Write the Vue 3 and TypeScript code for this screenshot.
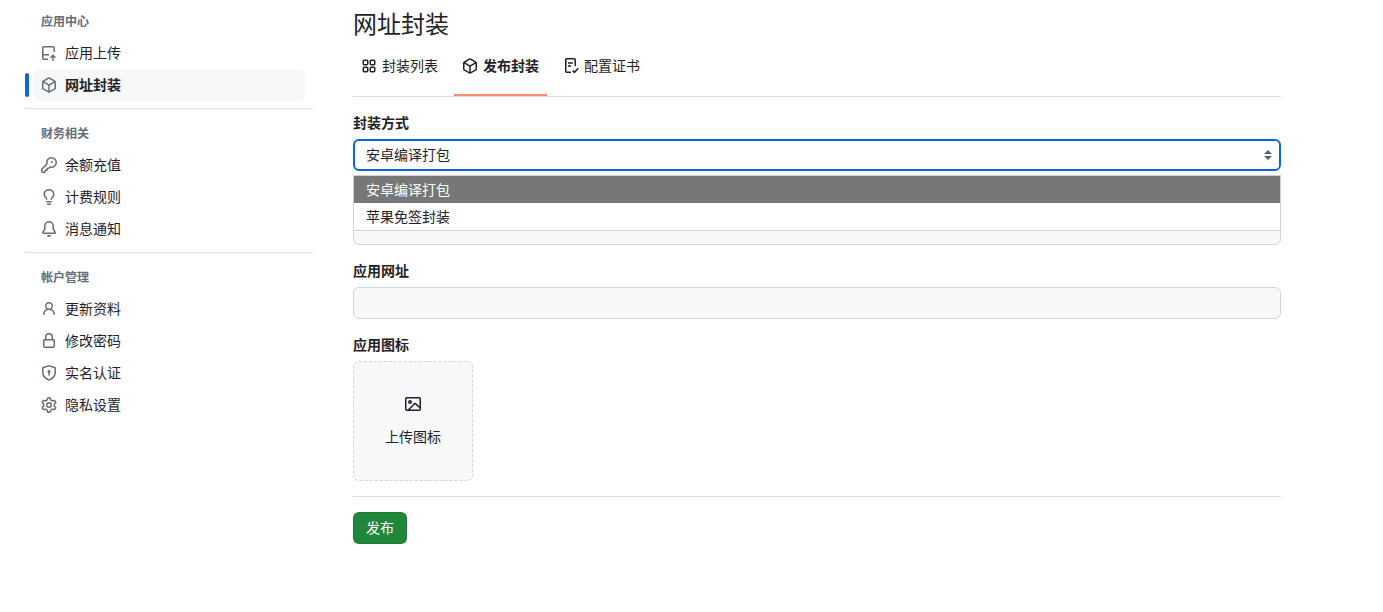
<script setup lang="ts">
const pkg = "m8.878.392 5.25 3.045c.54.314.872.89.872 1.514v6.098a1.75 1.75 0 0 1-.872 1.514l-5.25 3.045a1.75 1.75 0 0 1-1.756 0l-5.25-3.045A1.75 1.75 0 0 1 1 11.049V4.951c0-.624.332-1.201.872-1.514L7.122.392a1.75 1.75 0 0 1 1.756 0ZM7.875 1.69l-4.63 2.685L8 7.133l4.755-2.758-4.63-2.685a.248.248 0 0 0-.25 0ZM2.5 5.677v5.372c0 .09.047.171.125.216l4.625 2.683V8.432Zm6.25 8.271 4.625-2.683a.25.25 0 0 0 .125-.216V5.677L8.75 8.432Z";
const upload = "M1 2.75C1 1.784 1.784 1 2.75 1h9.5C13.216 1 14 1.784 14 2.75V7h-1.5V2.75a.25.25 0 0 0-.25-.25h-9.5a.25.25 0 0 0-.25.25V9h5.5v1.5H2.5v2.75c0 .138.112.25.25.25H7V15H2.75A1.75 1.75 0 0 1 1 13.25ZM12 9.2l3 3-1.05 1.05-1.2-1.2V16h-1.5v-3.95l-1.2 1.2L9 12.2Z";
const key = "M10.5 0a5.499 5.499 0 1 1-1.288 10.848l-.932.932a.749.749 0 0 1-.53.22H7v.75a.749.749 0 0 1-.22.53l-.5.5a.749.749 0 0 1-.53.22H5v.75a.749.749 0 0 1-.22.53l-.5.5a.749.749 0 0 1-.53.22h-2A1.75 1.75 0 0 1 0 14.25v-2c0-.199.079-.389.22-.53l4.932-4.932A5.5 5.5 0 0 1 10.5 0Zm-4 5.5c-.001.431.069.86.205 1.269a.75.75 0 0 1-.181.768L1.5 12.56v1.69c0 .138.112.25.25.25h1.69l.06-.06v-1.19a.75.75 0 0 1 .75-.75h1.19l.06-.06v-1.19a.75.75 0 0 1 .75-.75h1.19l1.023-1.025a.75.75 0 0 1 .768-.18A4 4 0 1 0 6.5 5.5ZM11 6a1 1 0 1 1 0-2 1 1 0 0 1 0 2Z";
const bulb = "M8 1.5c-2.363 0-4 1.69-4 3.75 0 .984.424 1.625.984 2.304l.214.253c.223.264.47.556.673.848.284.411.537.896.621 1.49a.75.75 0 0 1-1.484.211c-.04-.282-.163-.547-.37-.847a8.456 8.456 0 0 0-.542-.68c-.084-.1-.173-.205-.268-.32C3.201 7.75 2.5 6.766 2.5 5.25 2.5 2.31 4.863 0 8 0s5.5 2.31 5.5 5.25c0 1.516-.701 2.5-1.328 3.259-.095.115-.184.22-.268.319-.207.245-.383.453-.541.681-.208.3-.33.565-.37.847a.751.751 0 0 1-1.485-.212c.084-.593.337-1.078.621-1.489.203-.292.45-.584.673-.848.075-.088.147-.173.213-.253.561-.679.985-1.32.985-2.304 0-2.06-1.637-3.75-4-3.75ZM5.75 12h4.5a.75.75 0 0 1 0 1.5h-4.5a.75.75 0 0 1 0-1.5ZM6 15.25a.75.75 0 0 1 .75-.75h2.5a.75.75 0 0 1 0 1.5h-2.5a.75.75 0 0 1-.75-.75Z";
const bell = "M8 16a2 2 0 0 0 1.985-1.75c.017-.137-.097-.25-.235-.25h-3.5c-.138 0-.252.113-.235.25A2 2 0 0 0 8 16ZM3 5a5 5 0 0 1 10 0v2.947c0 .05.015.098.042.139l1.703 2.555A1.519 1.519 0 0 1 13.482 13H2.518a1.516 1.516 0 0 1-1.263-2.36l1.703-2.554A.255.255 0 0 0 3 7.947Zm5-3.5A3.5 3.5 0 0 0 4.5 5v2.947c0 .346-.102.683-.294.97l-1.703 2.556a.017.017 0 0 0-.003.01l.001.006c0 .002.002.004.004.006l.006.004.007.001h10.964l.007-.001.006-.004.004-.006.001-.007a.017.017 0 0 0-.003-.01l-1.703-2.554a1.745 1.745 0 0 1-.294-.97V5A3.5 3.5 0 0 0 8 1.5Z";
const person = "M10.561 8.073a6.005 6.005 0 0 1 3.432 5.142.75.75 0 1 1-1.498.07 4.5 4.5 0 0 0-8.99 0 .75.75 0 0 1-1.498-.07 6.004 6.004 0 0 1 3.431-5.142 3.999 3.999 0 1 1 5.123 0ZM10.5 5a2.5 2.5 0 1 0-5 0 2.5 2.5 0 0 0 5 0Z";
const lock = "M4 4a4 4 0 0 1 8 0v2h.25c.966 0 1.75.784 1.75 1.75v5.5A1.75 1.75 0 0 1 12.25 15h-8.5A1.75 1.75 0 0 1 2 13.25v-5.5C2 6.784 2.784 6 3.75 6H4Zm8.25 3.5h-8.5a.25.25 0 0 0-.25.25v5.5c0 .138.112.25.25.25h8.5a.25.25 0 0 0 .25-.25v-5.5a.25.25 0 0 0-.25-.25ZM10.5 6V4a2.5 2.5 0 1 0-5 0v2Z";
const shield = "m8.533.133 5.25 1.68A1.75 1.75 0 0 1 15 3.48V7c0 1.566-.32 3.182-1.303 4.682-.983 1.498-2.585 2.813-5.032 3.855a1.697 1.697 0 0 1-1.33 0c-2.447-1.042-4.049-2.357-5.032-3.855C1.32 10.182 1 8.566 1 7V3.48a1.75 1.75 0 0 1 1.217-1.667l5.25-1.68a1.748 1.748 0 0 1 1.066 0Zm-.61 1.429.001.001-5.25 1.68a.251.251 0 0 0-.174.237V7c0 1.36.275 2.666 1.057 3.859.784 1.194 2.121 2.342 4.366 3.298a.196.196 0 0 0 .154 0c2.245-.957 3.582-2.103 4.366-3.297C13.225 9.666 13.5 8.358 13.5 7V3.48a.25.25 0 0 0-.174-.238l-5.25-1.68a.25.25 0 0 0-.153 0ZM9.5 6.5c0 .536-.286 1.032-.75 1.299V10a.75.75 0 0 1-1.5 0V7.799A1.5 1.5 0 1 1 9.5 6.5Z";
const gear = "M8 0a8.2 8.2 0 0 1 .701.031C9.444.095 9.99.645 10.16 1.29l.288 1.107c.018.066.079.158.212.224.231.114.454.243.668.386.123.082.233.09.299.071l1.103-.303c.644-.176 1.392.021 1.82.63.27.385.506.792.704 1.218.315.675.111 1.422-.364 1.891l-.814.806c-.049.048-.098.147-.088.294.016.257.016.515 0 .772-.01.147.038.246.088.294l.814.806c.475.469.679 1.216.364 1.891a7.977 7.977 0 0 1-.704 1.217c-.428.61-1.176.807-1.82.63l-1.102-.302c-.067-.019-.177-.011-.3.071a5.909 5.909 0 0 1-.668.386c-.133.066-.194.158-.211.224l-.29 1.106c-.168.646-.715 1.196-1.458 1.26a8.006 8.006 0 0 1-1.402 0c-.743-.064-1.289-.614-1.458-1.26l-.289-1.106c-.018-.066-.079-.158-.212-.224a5.738 5.738 0 0 1-.668-.386c-.123-.082-.233-.09-.299-.071l-1.103.303c-.644.176-1.392-.021-1.82-.63a8.12 8.12 0 0 1-.704-1.218c-.315-.675-.111-1.422.363-1.891l.815-.806c.05-.048.098-.147.088-.294a6.214 6.214 0 0 1 0-.772c.01-.147-.038-.246-.088-.294l-.815-.806C.635 6.045.431 5.298.746 4.623a7.92 7.92 0 0 1 .704-1.217c.428-.61 1.176-.807 1.82-.63l1.102.302c.067.019.177.011.3-.071.214-.143.437-.272.668-.386.133-.066.194-.158.211-.224l.29-1.106C6.009.645 6.556.095 7.299.03 7.53.01 7.764 0 8 0Zm-.571 1.525c-.036.003-.108.036-.137.146l-.289 1.105c-.147.561-.549.967-.998 1.189-.173.086-.34.183-.5.29-.417.278-.97.423-1.529.27l-1.103-.303c-.109-.03-.175.016-.195.045-.22.312-.412.644-.573.99-.014.031-.021.11.059.19l.815.806c.411.406.562.957.53 1.456a4.709 4.709 0 0 0 0 .582c.032.499-.119 1.05-.53 1.456l-.815.806c-.081.08-.073.159-.059.19.162.346.353.677.573.989.02.03.085.076.195.046l1.102-.303c.56-.153 1.113-.008 1.53.27.161.107.328.204.501.29.447.222.85.629.997 1.189l.289 1.105c.029.109.101.143.137.146a6.6 6.6 0 0 0 1.142 0c.036-.003.108-.036.137-.146l.289-1.105c.147-.561.549-.967.998-1.189.173-.086.34-.183.5-.29.417-.278.97-.423 1.529-.27l1.103.303c.109.029.175-.016.195-.045.22-.313.411-.644.573-.99.014-.031.021-.11-.059-.19l-.815-.806c-.411-.406-.562-.957-.53-1.456a4.709 4.709 0 0 0 0-.582c-.032-.499.119-1.05.53-1.456l.815-.806c.081-.08.073-.159.059-.19a6.464 6.464 0 0 0-.573-.989c-.02-.03-.085-.076-.195-.046l-1.102.303c-.56.153-1.113.008-1.53-.27a4.44 4.44 0 0 0-.501-.29c-.447-.222-.85-.629-.997-1.189l-.289-1.105c-.029-.11-.101-.143-.137-.146a6.6 6.6 0 0 0-1.142 0ZM11 8a3 3 0 1 1-6 0 3 3 0 0 1 6 0ZM9.5 8a1.5 1.5 0 1 0-3.001.001A1.5 1.5 0 0 0 9.5 8Z";
const apps = "M1.5 3.25c0-.966.784-1.75 1.75-1.75h2.5c.966 0 1.75.784 1.75 1.75v2.5A1.75 1.75 0 0 1 5.75 7.5h-2.5A1.75 1.75 0 0 1 1.5 5.75Zm7 0c0-.966.784-1.75 1.75-1.75h2.5c.966 0 1.75.784 1.75 1.75v2.5a1.75 1.75 0 0 1-1.75 1.75h-2.5A1.75 1.75 0 0 1 8.5 5.75Zm-7 7c0-.966.784-1.75 1.75-1.75h2.5c.966 0 1.75.784 1.75 1.75v2.5a1.75 1.75 0 0 1-1.75 1.75h-2.5a1.75 1.75 0 0 1-1.75-1.75Zm7 0c0-.966.784-1.75 1.75-1.75h2.5c.966 0 1.75.784 1.75 1.75v2.5a1.75 1.75 0 0 1-1.75 1.75h-2.5a1.75 1.75 0 0 1-1.75-1.75ZM3.25 3a.25.25 0 0 0-.25.25v2.5c0 .138.112.25.25.25h2.5A.25.25 0 0 0 6 5.75v-2.5A.25.25 0 0 0 5.75 3Zm7 0a.25.25 0 0 0-.25.25v2.5c0 .138.112.25.25.25h2.5a.25.25 0 0 0 .25-.25v-2.5a.25.25 0 0 0-.25-.25ZM3.25 10a.25.25 0 0 0-.25.25v2.5c0 .138.112.25.25.25h2.5a.25.25 0 0 0 .25-.25v-2.5a.25.25 0 0 0-.25-.25Zm7 0a.25.25 0 0 0-.25.25v2.5c0 .138.112.25.25.25h2.5a.25.25 0 0 0 .25-.25v-2.5a.25.25 0 0 0-.25-.25Z";
const image = "M16 13.25A1.75 1.75 0 0 1 14.25 15H1.75A1.75 1.75 0 0 1 0 13.25V2.75C0 1.784.784 1 1.75 1h12.5c.966 0 1.75.784 1.75 1.75ZM1.75 2.5a.25.25 0 0 0-.25.25v10.5c0 .138.112.25.25.25h.94l.03-.03 6.077-6.078a1.75 1.75 0 0 1 2.412-.06L14.5 10.31V2.75a.25.25 0 0 0-.25-.25Zm12.5 11a.25.25 0 0 0 .25-.25v-.917l-4.298-3.889a.25.25 0 0 0-.344.009L4.81 13.5ZM7 6a2 2 0 1 1-3.999.001A2 2 0 0 1 7 6ZM5.5 6a.5.5 0 1 0-1 0 .5.5 0 0 0 1 0Z";
const cert = "M2 1.75C2 .784 2.784 0 3.75 0h7.5C12.216 0 13 .784 13 1.75V8h-1.5V1.75a.25.25 0 0 0-.25-.25h-7.5a.25.25 0 0 0-.25.25v11.5c0 .138.112.25.25.25H8V15H3.75A1.75 1.75 0 0 1 2 13.25ZM5 4.25h5v1.5H5Zm0 3h3v1.5H5ZM15.8 10.8l-4.3 4.7-2.4-2.3 1-1.1 1.3 1.2 3.3-3.5Z";

interface Item { label: string; icon: string; active?: boolean }
const groups: { title: string; items: Item[] }[] = [
  { title: "应用中心", items: [{ label: "应用上传", icon: upload }, { label: "网址封装", icon: pkg, active: true }] },
  { title: "财务相关", items: [{ label: "余额充值", icon: key }, { label: "计费规则", icon: bulb }, { label: "消息通知", icon: bell }] },
  { title: "帐户管理", items: [{ label: "更新资料", icon: person }, { label: "修改密码", icon: lock }, { label: "实名认证", icon: shield }, { label: "隐私设置", icon: gear }] },
];
const tabs: Item[] = [
  { label: "封装列表", icon: apps },
  { label: "发布封装", icon: pkg, active: true },
  { label: "配置证书", icon: cert },
];
</script>

<template>
  <div class="page">
    <aside class="side">
      <section v-for="g in groups" :key="g.title" class="group">
        <h3 class="group-title">{{ g.title }}</h3>
        <a v-for="it in g.items" :key="it.label" class="nav" :class="{ on: it.active }">
          <svg class="ico" viewBox="0 0 16 16" width="16" height="16"><path :d="it.icon" /></svg>
          <span class="txt">{{ it.label }}</span>
        </a>
      </section>
    </aside>
    <main class="main">
      <h1 class="title">网址封装</h1>
      <nav class="tabs">
        <a v-for="t in tabs" :key="t.label" class="tab" :class="{ on: t.active }">
          <svg viewBox="0 0 16 16" width="16" height="16"><path :d="t.icon" /></svg>
          <span class="txt">{{ t.label }}</span>
        </a>
      </nav>
      <form class="form" @submit.prevent>
        <div class="field select-field">
          <label>封装方式</label>
          <div class="select">
            <span class="txt">安卓编译打包</span>
            <svg class="caret" viewBox="0 0 16 16" width="16" height="16"><path d="M4 7 8 3l4 4ZM4 9h8l-4 4Z" /></svg>
          </div>
          <ul class="menu">
            <li class="sel">安卓编译打包</li>
            <li>苹果免签封装</li>
          </ul>
        </div>
        <div class="field">
          <label></label>
          <div class="input"></div>
        </div>
        <div class="field">
          <label>应用网址</label>
          <div class="input"></div>
        </div>
        <div class="field last">
          <label>应用图标</label>
          <div class="drop">
            <svg viewBox="0 0 16 16" width="16" height="16"><path :d="image" /></svg>
            <span>上传图标</span>
          </div>
        </div>
        <div class="foot"><button class="btn" type="button"><span class="txt">发布</span></button></div>
      </form>
    </main>
  </div>
</template>

<style>
html, body { margin: 0; background: #fff; overflow: hidden; }
</style>

<style scoped>
.page {
  display: flex;
  height: 612px;
  font-family: "Liberation Sans", "Noto Sans CJK SC", sans-serif;
  font-size: 14px;
  color: #1f2328;
}
.txt { display: block; padding-bottom: 2px; }
.side { width: 288px; margin-left: 25px; padding-top: 5px; flex: none; }
.group { border-top: 1px solid #d8dee4; padding: 16px 0 7px; }
.group:first-child { border-top: 0; padding-top: 8px; }
.group-title { margin: 0 0 0 16px; font-size: 12px; line-height: 18px; font-weight: 600; color: #656d76; height: 18px; }
.nav { position: relative; display: flex; align-items: center; gap: 8px; height: 32px; margin-left: 8px; width: 272px; padding-left: 8px; box-sizing: border-box; border-radius: 6px; }
.group-title + .nav { margin-top: 6px; }
.ico { fill: #656d76; flex: none; }
.nav.on { background: #f6f8fa; font-weight: 600; }
.nav.on::before { content: ""; position: absolute; left: -8px; top: 4px; width: 4px; height: 24px; border-radius: 6px; background: #0969da; }
.main { width: 928px; margin-left: 40px; flex: none; }
.title { margin: 0; font-size: 24px; line-height: 36px; font-weight: 400; padding-top: 7px; height: 35px; }
.tabs { display: flex; gap: 8px; height: 54px; border-bottom: 1px solid #d8dee4; }
.tab { display: flex; align-items: center; gap: 5px; padding: 0 8px 6px; position: relative; }
.tab svg { fill: #1f2328; flex: none; }
.tab.on { font-weight: 600; }
.tab.on::after { content: ""; position: absolute; left: 0; right: 0; bottom: 0; height: 2px; background: #fd8c73; }
.form { padding-top: 16px; }
.field { position: relative; margin-bottom: 16px; }
.field.last { margin-bottom: 15px; }
label { display: block; font-weight: 600; line-height: 20px; height: 20px; margin-bottom: 6px; }
.select, .input { height: 32px; box-sizing: border-box; border-radius: 6px; border: 1px solid #d0d7de; }
.input { background: #f6f8fa; }
.select { display: flex; align-items: center; justify-content: space-between; padding: 0 3px 0 11px; border: 2px solid #0969da; background: #fff; }
.caret { fill: #59636e; }
.menu { position: absolute; left: 0; right: 0; top: 62px; margin: 0; padding: 0; list-style: none; background: #fff; border: 1px solid #cfcfcf; z-index: 2; }
.menu li { height: 27px; line-height: 29px; padding-left: 12px; }
.menu li.sel { background: #777; color: #fff; }
.drop { width: 120px; height: 120px; box-sizing: border-box; border: 1px dashed #d0d7de; border-radius: 6px; background: #f6f8fa; display: flex; flex-direction: column; align-items: center; justify-content: center; gap: 14px; }
.drop svg { fill: #1f2328; }
.foot { border-top: 1px solid #d8dee4; padding-top: 15px; }
.btn { display: block; width: 54px; height: 32px; padding: 0; border: 1px solid rgba(31,35,40,.15); border-radius: 6px; background: #1f883d; color: #fff; font: inherit; }
</style>
